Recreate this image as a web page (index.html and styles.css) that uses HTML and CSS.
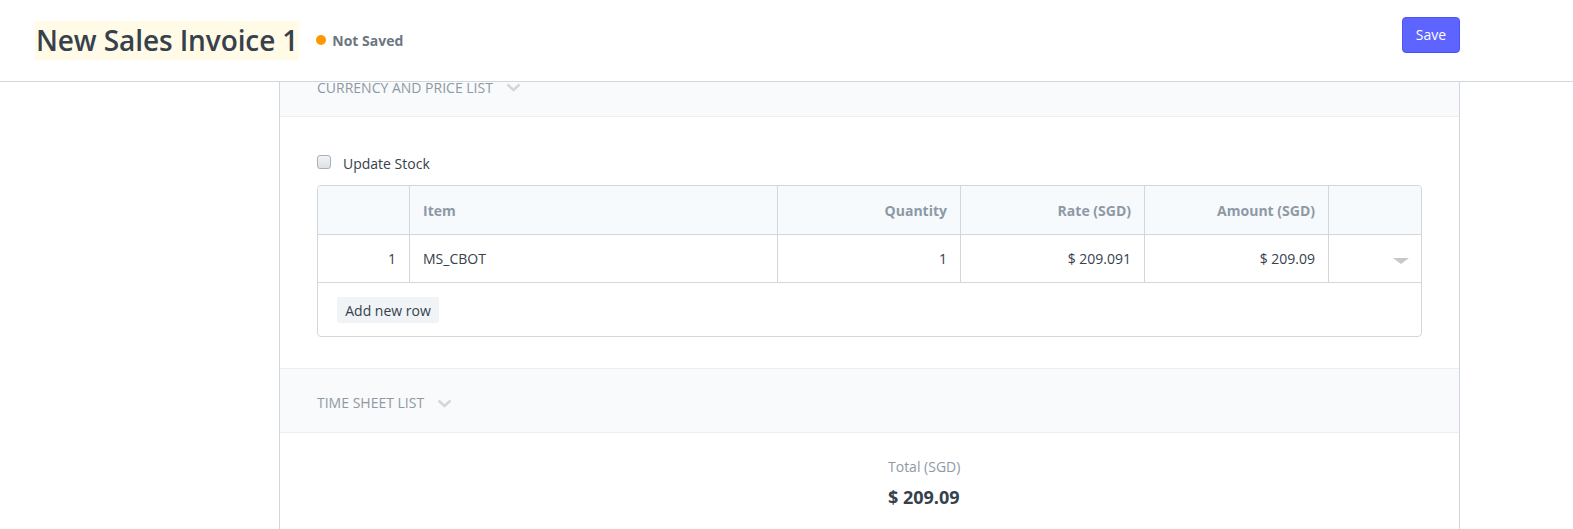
FILE: index.html
```html
<!DOCTYPE html>
<html lang="en">
<head>
<meta charset="utf-8">
<title>New Sales Invoice 1</title>
<link rel="stylesheet" href="styles.css">
</head>
<body>
<header class="page-head">
  <div class="title-group">
    <h1 class="title">New Sales Invoice 1</h1>
    <span class="status"><span class="dot"></span>Not Saved</span>
  </div>
  <button class="btn-save">Save</button>
</header>

<main class="page-body">
  <div class="form-panel">
    <div class="section-head">
      <span>Currency and Price List</span>
      <svg class="chev" width="15" height="9" viewBox="0 0 15 9"><polyline points="1.5,1.5 7.5,7 13.5,1.5" fill="none" stroke="#d1d8dd" stroke-width="2.6"/></svg>
    </div>

    <div class="section-body">
      <label class="check-row">
        <span class="checkbox"></span>
        <span>Update Stock</span>
      </label>

      <div class="grid">
        <div class="grid-row grid-heading">
          <div class="cell"></div>
          <div class="cell">Item</div>
          <div class="cell right">Quantity</div>
          <div class="cell right">Rate (SGD)</div>
          <div class="cell right">Amount (SGD)</div>
          <div class="cell"></div>
        </div>
        <div class="grid-row">
          <div class="cell right">1</div>
          <div class="cell">MS_CBOT</div>
          <div class="cell right">1</div>
          <div class="cell right">$ 209.091</div>
          <div class="cell right">$ 209.09</div>
          <div class="cell caret-cell"><span class="caret"></span></div>
        </div>
        <div class="grid-footer">
          <button class="btn-add">Add new row</button>
        </div>
      </div>
    </div>

    <div class="section-head bordered">
      <span>Time Sheet List</span>
      <svg class="chev" width="15" height="9" viewBox="0 0 15 9"><polyline points="1.5,1.5 7.5,7 13.5,1.5" fill="none" stroke="#d1d8dd" stroke-width="2.6"/></svg>
    </div>

    <div class="totals">
      <div class="total-label">Total (SGD)</div>
      <div class="total-value">$ 209.09</div>
    </div>
  </div>
</main>
</body>
</html>
```

FILE: styles.css
```css
* { box-sizing: border-box; }

html, body {
  margin: 0;
  padding: 0;
  background: #fff;
  font-family: "Open Sans", "Noto Sans", sans-serif;
  color: #36414c;
  overflow: hidden;
}

.page-head {
  position: fixed;
  top: 0;
  left: 0;
  right: 0;
  height: 82px;
  background: #fff;
  border-bottom: 1px solid #d1d8dd;
  z-index: 10;
  display: flex;
  align-items: center;
  justify-content: space-between;
  padding: 0 113px 0 35px;
}

.title-group {
  display: flex;
  align-items: center;
  gap: 17px;
  margin-top: -1px;
}

.title {
  margin: 0;
  font-size: 28px;
  font-weight: 600;
  line-height: 39px;
  background: #fffbe6;
  color: #36414c;
  padding: 0 1px;
  letter-spacing: -0.1px;
}

.status {
  display: flex;
  align-items: center;
  gap: 6px;
  font-size: 14px;
  font-weight: 700;
  color: #6c7680;
}

.dot {
  width: 10px;
  height: 10px;
  border-radius: 50%;
  background: #ff9800;
}

.btn-save {
  width: 58px;
  height: 36px;
  margin-top: -12px;
  background: #5e64ff;
  border: 1px solid #4c52f5;
  border-radius: 4px;
  color: #fff;
  font-family: inherit;
  font-size: 14px;
  padding: 0;
}

.page-body {
  padding-top: 54px;
  padding-left: 279px;
}

.form-panel {
  width: 1181px;
  min-height: 600px;
  border-left: 1px solid #d1d8dd;
  border-right: 1px solid #d1d8dd;
}

.section-head {
  height: 63px;
  background: #f9fafb;
  border-bottom: 1px solid #ebeff2;
  display: flex;
  align-items: center;
  gap: 13px;
  padding: 4px 0 0 37px;
  font-size: 14px;
  text-transform: uppercase;
  color: #8d99a6;
}

.section-head.bordered {
  height: 65px;
  border-top: 1px solid #ebeff2;
}

.chev { display: block; margin-top: 1px; }

.section-body {
  padding: 34px 37px 31px 37px;
}

.check-row {
  display: flex;
  align-items: center;
  gap: 12px;
  height: 20px;
  margin-top: 2px;
  font-size: 14px;
  color: #36414c;
  margin-bottom: 12px;
}

.checkbox {
  width: 14px;
  height: 14px;
  margin-top: -2px;
  border: 1px solid #a9b1b8;
  border-radius: 3px;
  background: linear-gradient(#f1f3f5, #dde1e5);
}

.grid {
  border: 1px solid #d1d8dd;
  border-radius: 4px;
}

.grid-row {
  display: grid;
  grid-template-columns: 92px 368px 183px 184px 184px 1fr;
  height: 48px;
  border-bottom: 1px solid #d1d8dd;
  font-size: 14px;
}

.grid-heading {
  height: 49px;
  background: #f7fafc;
  font-weight: 700;
  color: #8d99a6;
  border-radius: 4px 4px 0 0;
}

.cell {
  display: flex;
  align-items: center;
  padding: 0 13px;
  border-right: 1px solid #d1d8dd;
}

.cell:last-child { border-right: none; }

.cell.right { justify-content: flex-end; }

.caret-cell { justify-content: flex-end; padding-right: 12px; }

.caret {
  width: 0;
  height: 0;
  border-left: 8px solid transparent;
  border-right: 8px solid transparent;
  border-top: 6px solid #c8c8c8;
  margin-top: 4px;
}

.grid-footer {
  height: 53px;
  display: flex;
  align-items: center;
  padding: 1px 19px 0;
}

.btn-add {
  height: 26px;
  width: 102px;
  padding: 0;
  border: none;
  border-radius: 3px;
  background: #f0f4f7;
  color: #36414c;
  font-family: inherit;
  font-size: 14px;
}

.totals {
  padding: 24px 0 0 608px;
}

.total-label {
  font-size: 14px;
  color: #8d99a6;
  line-height: 20px;
}

.total-value {
  margin-top: 9px;
  font-size: 18px;
  font-weight: 700;
  color: #36414c;
  line-height: 22px;
}
```
